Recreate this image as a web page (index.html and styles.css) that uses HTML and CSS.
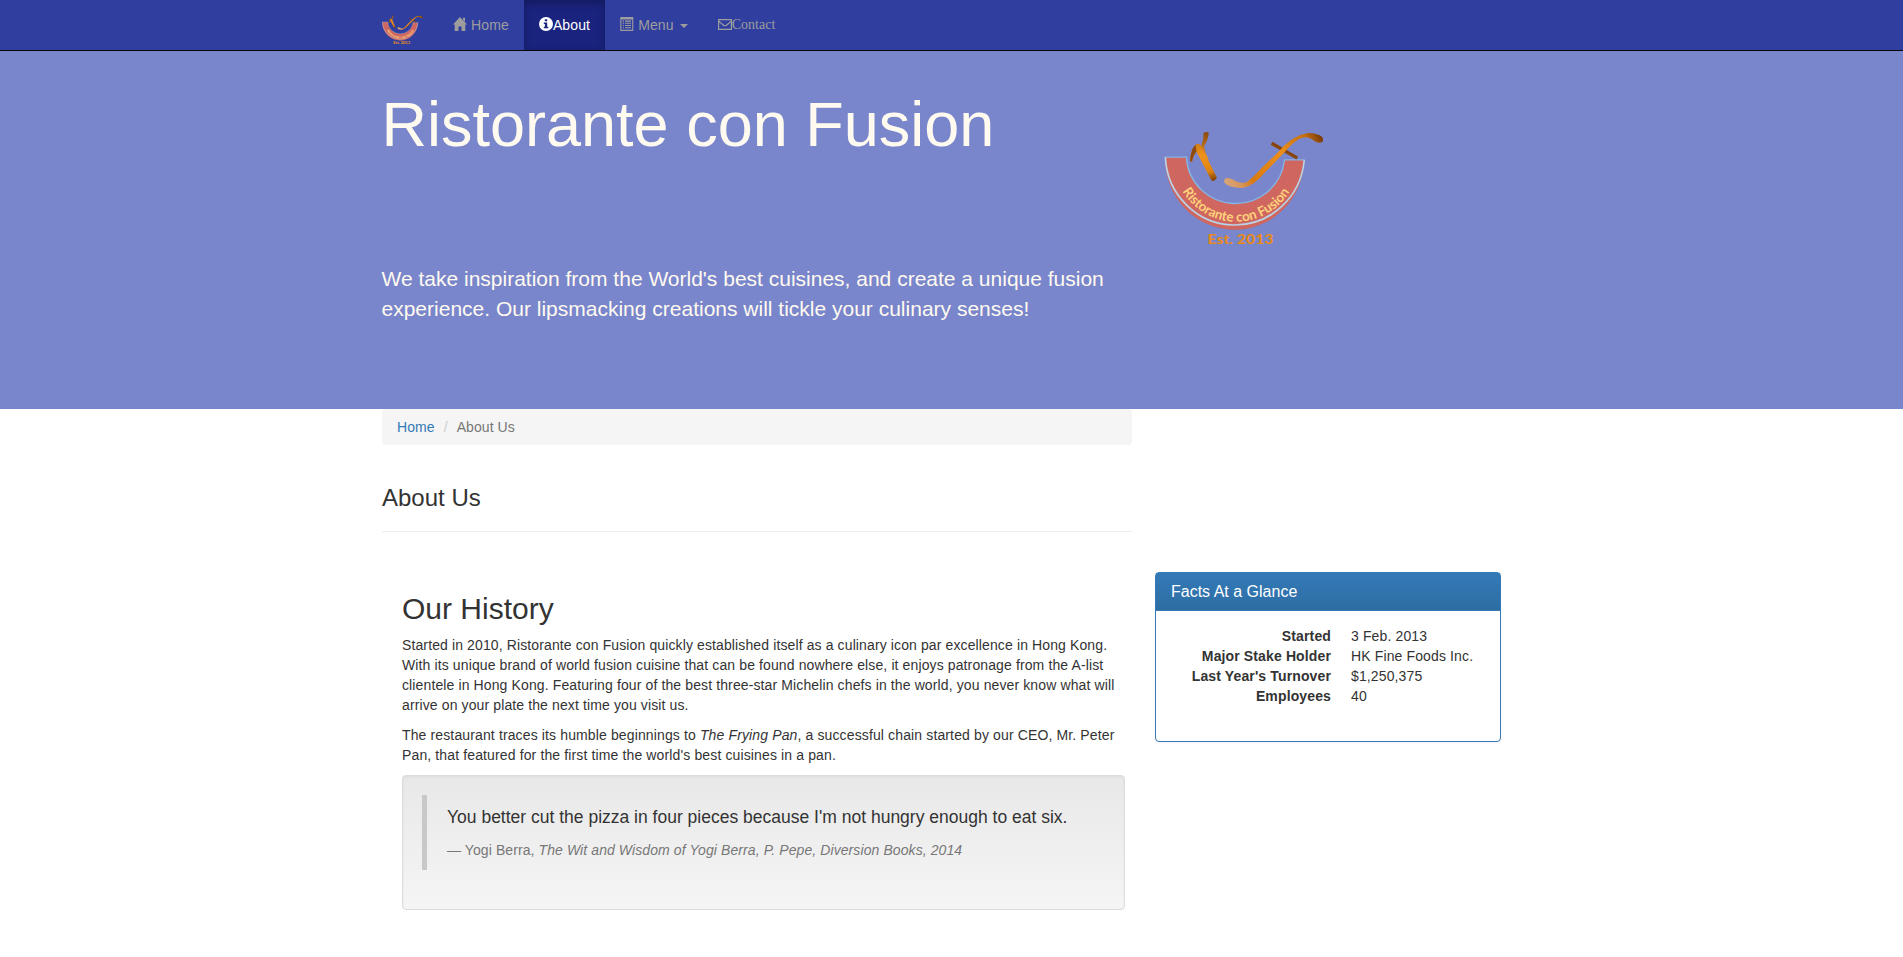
FILE: index.html
```html
<!DOCTYPE html>
<html lang="en">
<head>
<meta charset="utf-8">
<title>Ristorante Con Fusion: About Us</title>
<link rel="stylesheet" href="styles.css">
</head>
<body>
<svg class="defs" width="0" height="0" aria-hidden="true">
  <defs>
    <linearGradient id="gold" gradientUnits="userSpaceOnUse" x1="150" y1="60" x2="190" y2="182">
      <stop offset="0" stop-color="#c87818"/><stop offset="0.35" stop-color="#f0921a"/><stop offset="0.75" stop-color="#e08410"/><stop offset="1" stop-color="#7a3c04"/>
    </linearGradient>
    <linearGradient id="branch" gradientUnits="userSpaceOnUse" x1="168" y1="36" x2="160" y2="110">
      <stop offset="0" stop-color="#8a4a10"/><stop offset="0.6" stop-color="#c07018"/><stop offset="1" stop-color="#f0921a"/>
    </linearGradient>
    <linearGradient id="swoosh" gradientUnits="userSpaceOnUse" x1="222" y1="190" x2="516" y2="50">
      <stop offset="0" stop-color="#d9a77c"/><stop offset="0.14" stop-color="#d6955a"/><stop offset="0.25" stop-color="#d97a10"/><stop offset="0.6" stop-color="#ec8e18"/><stop offset="0.85" stop-color="#c8700c"/><stop offset="1" stop-color="#74380a"/>
    </linearGradient>
    <symbol id="logo" viewBox="42 32 478 345">
      <path d="M45 110H109A147 146 0 0 0 402 118H461A208 213 0 0 1 45 110Z" fill="#cf665f"/>
      <path d="M45 110H109A147 146 0 0 0 402 118H461" fill="none" stroke="#86b4e4" stroke-width="4"/>
      <path d="M461 118A208 213 0 0 1 46 110" fill="none" stroke="#b9d2e6" stroke-width="5"/>
      <path id="arc" d="M97 212A187 187 0 0 0 418 212" fill="none"/>
      <text class="logo-name"><textPath href="#arc" textLength="384" lengthAdjust="spacingAndGlyphs">Ristorante con Fusion</textPath></text>
      <text class="logo-est" x="172" y="371" textLength="197" lengthAdjust="spacingAndGlyphs">Est. 2013</text>
      <path d="M160 38Q168 33 176 37Q174 60 162 76Q162 94 176 116L164 112Q150 90 154 74Q161 58 160 38Z" fill="url(#branch)"/>
      <path d="M120 122Q121 88 136 73Q146 66 153 76L200 172Q194 184 184 180L139 94Q129 104 126 124Z" fill="url(#gold)"/>
      <path d="M120 122Q121 88 136 73L139 94Q129 104 126 124Z" fill="#8a4a10"/>
      <path d="M366 64L442 108L438 117L361 73Z" fill="#87450a"/>
      <path d="M222 177Q228 168 246 176Q273 192 289 184Q308 171 330 146L382 96Q425 45 472 38Q498 38 514 49Q520 57 515 65Q502 70 490 61Q470 43 445 56Q424 69 400 98L346 153Q310 197 278 202Q236 203 222 186Z" fill="url(#swoosh)"/>
    </symbol>
  </defs>
</svg>

<nav class="navbar">
  <div class="container nav-row">
    <a class="brand" href="#"><svg class="brand-logo"><use href="#logo"/></svg></a>
    <a class="nav-link" href="#"><svg class="icon" viewBox="0 0 14 14"><path d="M7 0L14 7.6H12.3V14H8.5V9.6H5.5V14H1.7V7.6H0L7 0ZM10 .8h2v4l-2-2z" fill="currentColor"/></svg>&nbsp;Home</a>
    <a class="nav-link active" href="#"><svg class="icon" viewBox="0 0 14 14"><path fill-rule="evenodd" d="M7 0A7 7 0 1 1 7 14A7 7 0 0 1 7 0ZM5.8 2.2H8.2V4.3H5.8ZM4.8 5.4H8.2V9.8H9.3V11.3H4.8V9.8H5.9V6.9H4.8Z" fill="currentColor"/></svg>About</a>
    <a class="nav-link" href="#"><svg class="icon" viewBox="0 0 14 14"><path fill-rule="evenodd" d="M.3 0H13.3V14H.3ZM1.4 2.4V12.8H12.2V2.4ZM2.7 3.6H4V4.7H2.7ZM5 3.6H11V4.7H5ZM2.7 5.8H4V6.8H2.7ZM5 5.8H11V6.8H5ZM2.7 8H4V9H2.7ZM5 8H11V9H5ZM2.7 10.2H4V11.2H2.7ZM5 10.2H11V11.2H5Z" fill="currentColor"/></svg>&nbsp;Menu <span class="caret"></span></a>
    <a class="nav-link contact" href="#"><svg class="icon" viewBox="0 0 14 14"><path d="M.6 3.6H13.4V13.4H.6ZM.8 5.2C2.6 7.1 4.4 8.1 5.6 9.2Q7 10.3 8.4 9.2C9.6 8.1 11.4 7.1 13.2 5.2" fill="none" stroke="currentColor" stroke-width="1.2"/></svg>Contact</a>
  </div>
</nav>

<header class="jumbotron">
  <div class="container jumbo-row">
    <div class="jumbo-text">
      <h1>Ristorante con Fusion</h1>
      <p>We take inspiration from the World's best cuisines, and create a unique fusion experience. Our lipsmacking creations will tickle your culinary senses!</p>
    </div>
    <svg class="jumbo-logo"><use href="#logo"/></svg>
  </div>
</header>

<main class="container">
  <div class="intro">
    <ol class="breadcrumb"><li><a href="#">Home</a></li><li class="current">About Us</li></ol>
    <h3>About Us</h3>
    <hr>
  </div>
  <div class="content-row">
    <section class="history">
      <h2>Our History</h2>
      <p class="story">Started in 2010, Ristorante con Fusion quickly established itself as a culinary icon par excellence in Hong Kong. With its unique brand of world fusion cuisine that can be found nowhere else, it enjoys patronage from the A-list clientele in Hong Kong. Featuring four of the best three-star Michelin chefs in the world, you never know what will arrive on your plate the next time you visit us.</p>
      <p>The restaurant traces its humble beginnings to <em>The Frying Pan</em>, a successful chain started by our CEO, Mr. Peter Pan, that featured for the first time the world's best cuisines in a pan.</p>
      <div class="well">
        <blockquote>
          <p>You better cut the pizza in four pieces because I'm not hungry enough to eat six.</p>
          <footer>— Yogi Berra, <cite>The Wit and Wisdom of Yogi Berra, P. Pepe, Diversion Books, 2014</cite></footer>
        </blockquote>
      </div>
    </section>
    <aside class="panel">
      <h3 class="panel-heading">Facts At a Glance</h3>
      <dl class="facts">
        <dt>Started</dt><dd>3 Feb. 2013</dd>
        <dt>Major Stake Holder</dt><dd>HK Fine Foods Inc.</dd>
        <dt>Last Year's Turnover</dt><dd>$1,250,375</dd>
        <dt>Employees</dt><dd>40</dd>
      </dl>
    </aside>
  </div>
</main>
</body>
</html>
```
FILE: styles.css
```css
* { box-sizing: border-box; }
html { overflow: hidden; }
body {
  margin: 0;
  font: 14px/20px "Liberation Sans", Arial, sans-serif;
  letter-spacing: .13px;
  color: #333;
  background: #fff;
}
a { color: #337ab7; text-decoration: none; }
h1, h2, h3 { font-weight: 400; margin: 0; letter-spacing: 0; }
.defs { position: absolute; }
.container { width: 1170px; margin: 0 auto 0 367px; padding: 0 15px; }

.navbar { height: 51px; background: #303f9f; border-bottom: 1px solid #080808; }
.nav-row { display: flex; }
.brand { width: 56px; height: 50px; padding-top: 15px; }
.brand-logo { display: block; width: 41px; height: 30px; }
.nav-link { height: 50px; padding: 15px; color: #9d9d9d; white-space: nowrap; }
.active {
  color: #fff;
  background: #1a237e;
  box-shadow: inset 0 3px 9px rgba(0, 0, 0, .25);
}
.contact { font-family: "Liberation Serif", "Times New Roman", serif; letter-spacing: 0; }
.icon { width: 14px; height: 14px; vertical-align: -1px; }
.caret {
  display: inline-block;
  margin-left: 2px;
  vertical-align: middle;
  border-top: 4px solid;
  border-left: 4px solid transparent;
  border-right: 4px solid transparent;
}

.jumbotron { height: 358px; background: #7986cb; color: floralwhite; letter-spacing: 0; }
.jumbo-row { display: flex; margin: 0 auto; }
.jumbo-text { width: 750px; padding-top: 42px; }
.jumbo-text h1 { font-size: 63px; line-height: 63px; }
.jumbo-text p { margin: 108px 0 0; font-size: 21px; line-height: 30px; }
.jumbo-logo { width: 160px; height: 115.5px; margin: 79.5px 0 0 32.5px; }
.logo-name { font: bold 40px Lato, "Open Sans", sans-serif; letter-spacing: 0; fill: #ffd27c; }
.logo-est { font: 900 42px Lato, "Open Sans", sans-serif; letter-spacing: 0; fill: #e58a1c; }

.intro { width: 750px; }
.breadcrumb {
  display: flex;
  margin: 0;
  padding: 8px 15px;
  list-style: none;
  letter-spacing: .08px;
  background: #f5f5f5;
  border-radius: 4px;
}
.current { color: #777; }
.current::before { content: "/\00a0"; padding: 0 5px 0 9px; color: #ccc; }
.intro h3 { margin-top: 40px; font-size: 24px; line-height: 26px; }
hr { margin: 20px 0; border: 0; border-top: 1px solid #eee; }

.content-row { display: flex; align-items: flex-start; gap: 30px; padding: 20px 20px 0; }
.history { width: 723px; }
.history h2 { margin: 20px 0 10px; font-size: 30px; line-height: 33px; }
.history p { margin: 0 0 10px; }
.history .story { letter-spacing: .118px; }
.well {
  padding: 19px;
  border: 1px solid #dcdcdc;
  border-radius: 4px;
  background: linear-gradient(#e8e8e8, #f5f5f5);
  box-shadow: inset 0 1px 3px rgba(0, 0, 0, .05), 0 1px 0 rgba(255, 255, 255, .1);
}
blockquote { margin: 0 0 20px; padding: 10px 20px; border-left: 5px solid #c8c8c8; }
blockquote p { font-size: 17.5px; line-height: 25px; letter-spacing: 0; }
blockquote footer { color: #777; letter-spacing: .09px; }

.panel {
  flex: none;
  width: 346px;
  height: 170px;
  border: 1px solid #337ab7;
  border-radius: 4px;
  box-shadow: 0 1px 2px rgba(0, 0, 0, .05);
}
.panel-heading {
  height: 38px;
  padding: 10px 15px;
  font-size: 16px;
  line-height: 17px;
  color: #fff;
  background: linear-gradient(#337ab7, #2e6da4);
  border-bottom: 1px solid #337ab7;
}
.facts { display: grid; grid-template-columns: 160px 1fr; column-gap: 20px; margin: 0; padding: 15px; }
.facts dt { font-weight: 700; text-align: right; }
.facts dd { margin: 0; }
```
